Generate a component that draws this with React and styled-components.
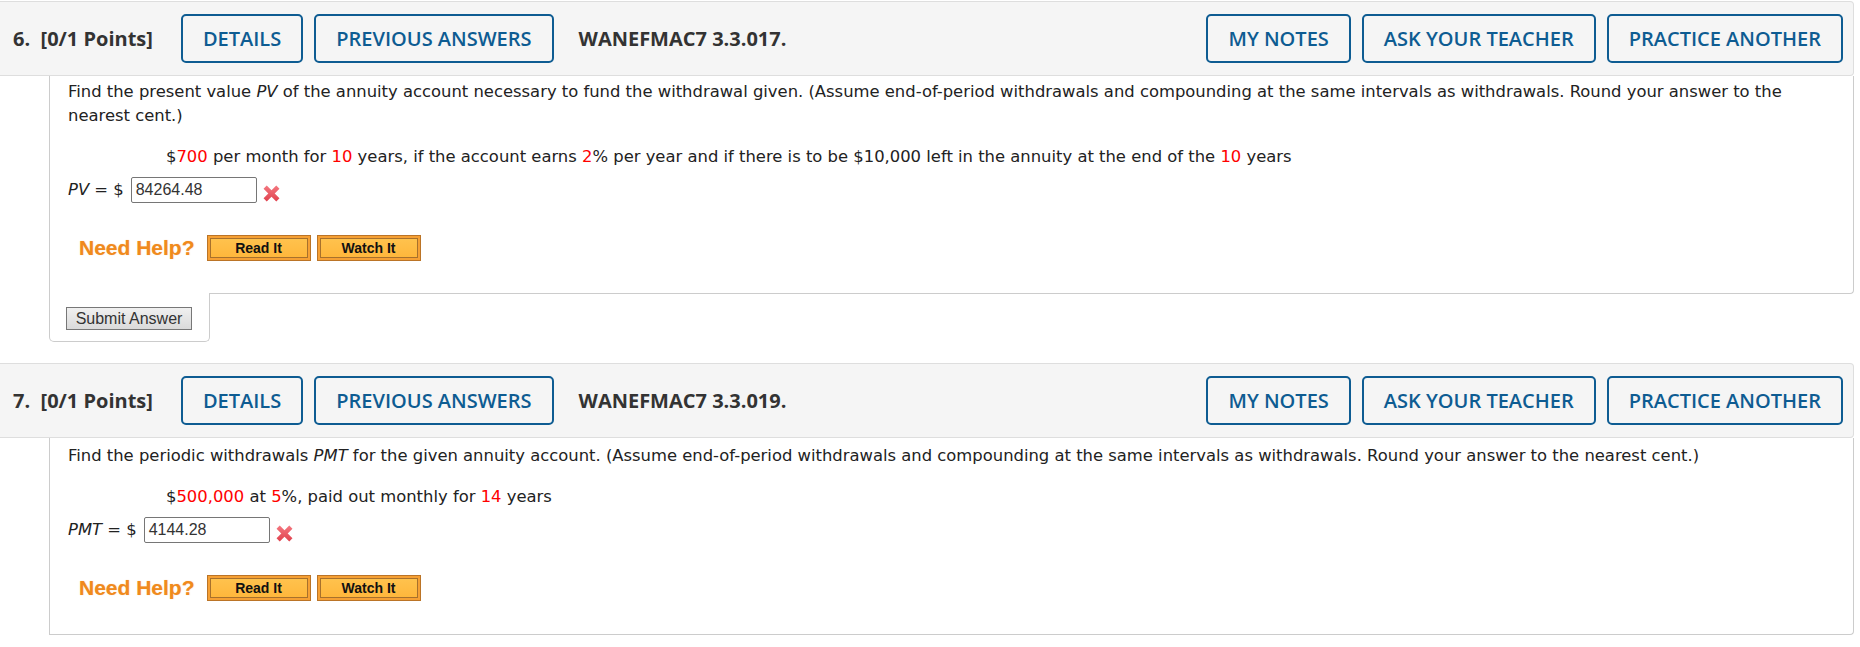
import React from 'react';
import styled, { createGlobalStyle } from 'styled-components';

const GlobalStyle = createGlobalStyle`
  body {
    margin: 0;
    background: #fff;
    font-family: "DejaVu Sans", Verdana, sans-serif;
  }
`

const Page = styled.div`
  width: 1854px;
  padding-top: 1px;
`

const Question = styled.section`
  margin-bottom: 21px;
`

const Header = styled.div`
  display: flex;
  align-items: center;
  gap: 11px;
  height: 73px;
  padding: 0 10px 0 13px;
  background: #f5f5f5;
  border: 1px solid #dedede;
  border-left: none;
  border-radius: 0 4px 4px 0;
  font-family: "Open Sans", "Noto Sans", sans-serif;
  font-size: 20px;
  line-height: 28px;
  color: #333;
`

const Points = styled.span`
  font-weight: 700;
  margin-right: 17px;
  white-space: pre;
`

const Code = styled.span`
  font-weight: 700;
  margin-left: 14px;
`

const RightGroup = styled.div`
  display: flex;
  gap: 11px;
  margin-left: auto;
`

const HeaderButton = styled.button`
  height: 49px;
  padding: 0 20px;
  background: transparent;
  border: 2px solid #0e5c92;
  border-radius: 5px;
  color: #0e5c92;
  font-family: inherit;
  font-size: 20px;
  font-weight: 600;
`

const Body = styled.div`
  margin-left: 49px;
  padding: ${p => p.$top}px 30px ${p => p.$bottom}px 18px;
  border: 1px solid #cccccc;
  border-top: none;
  border-radius: 0 0 4px 0;
  font-size: 16.4px;
  line-height: 24px;
  color: #222;
`

const Prompt = styled.p`
  margin: 0;
`

const Var = styled.i``

const Red = styled.span`
  color: #f00;
`

const Equation = styled.div`
  margin: 17px 0 0 98px;
`

const AnswerRow = styled.div`
  display: flex;
  align-items: center;
  margin-top: 8px;
`

const AnswerLabel = styled.span`
  margin-right: 7px;
`

const AnswerInput = styled.div`
  box-sizing: border-box;
  width: 126px;
  height: 26px;
  padding: 0 4px;
  border: 1px solid #767676;
  border-radius: 2px;
  font-family: "Liberation Sans", Arial, sans-serif;
  font-size: 16px;
  line-height: 24px;
  color: #333;
`

const WrongMark = styled.svg`
  width: 17px;
  height: 17px;
  margin-left: 6px;
  margin-top: 6px;
`

const HelpRow = styled.div`
  display: flex;
  align-items: center;
  margin: 32px 0 0 11px;
`

const NeedHelp = styled.span`
  font-family: "Liberation Sans", Arial, sans-serif;
  font-weight: 700;
  font-size: 21px;
  color: #f08a1d;
  margin-right: 12px;
  text-shadow: 0 0 1px rgba(240, 138, 29, 0.5);
`

const HelpButton = styled.button`
  box-sizing: border-box;
  width: 104px;
  height: 26px;
  margin-right: 6px;
  padding: 2px;
  background: #f6a034;
  border: 1px solid #bb7427;
  display: flex;
`

const HelpFace = styled.span`
  flex: 1;
  border: 1px solid #a8712c;
  background: linear-gradient(#ffc24d, #ffb73c);
  font-family: "Liberation Sans", Arial, sans-serif;
  font-weight: 700;
  font-size: 14px;
  line-height: 18px;
  color: #111;
`

const SubmitTab = styled.div`
  width: 143px;
  margin: -1px 0 0 49px;
  padding: 14px 0 11px 16px;
  background: #fff;
  border: 1px solid #cccccc;
  border-top: none;
  border-radius: 0 0 5px 5px;
  position: relative;
`

const SubmitButton = styled.button`
  box-sizing: border-box;
  width: 126px;
  height: 23px;
  padding: 0;
  background: linear-gradient(#f0f0f0, #dadada);
  border: 1px solid #777;
  font-family: "Liberation Sans", Arial, sans-serif;
  font-size: 16px;
  color: #333;
`

function Cross() {
  return (
    <WrongMark viewBox="0 0 16 16">
      <defs>
        <linearGradient id="xg" x1="0" y1="0" x2="0" y2="1">
          <stop offset="0" stopColor="#f47880" />
          <stop offset="1" stopColor="#e0414d" />
        </linearGradient>
      </defs>
      <path
        d="M0.5 3.5 L3.5 0.5 L8 5 L12.5 0.5 L15.5 3.5 L11 8 L15.5 12.5 L12.5 15.5 L8 11 L3.5 15.5 L0.5 12.5 L5 8 Z"
        fill="url(#xg)"
      />
    </WrongMark>
  )
}

function HelpButtons() {
  return (
    <HelpRow>
      <NeedHelp>Need Help?</NeedHelp>
      <HelpButton><HelpFace>Read It</HelpFace></HelpButton>
      <HelpButton><HelpFace>Watch It</HelpFace></HelpButton>
    </HelpRow>
  )
}

function QuestionHeader({ num, code }) {
  return (
    <Header>
      <Points>{num}.  [0/1 Points]</Points>
      <HeaderButton>DETAILS</HeaderButton>
      <HeaderButton>PREVIOUS ANSWERS</HeaderButton>
      <Code>{code}</Code>
      <RightGroup>
        <HeaderButton>MY NOTES</HeaderButton>
        <HeaderButton>ASK YOUR TEACHER</HeaderButton>
        <HeaderButton>PRACTICE ANOTHER</HeaderButton>
      </RightGroup>
    </Header>
  )
}

function App() {
  return (
    <Page>
      <GlobalStyle />
      <Question>
        <QuestionHeader num="6" code="WANEFMAC7 3.3.017." />
        <Body $top={4} $bottom={32}>
          <Prompt>
            Find the present value <Var>PV</Var> of the annuity account necessary to fund the withdrawal given. (Assume end-of-period withdrawals and compounding at the same intervals as withdrawals. Round your answer to the nearest cent.)
          </Prompt>
          <Equation>
            $<Red>700</Red> per month for <Red>10</Red> years, if the account earns <Red>2</Red>% per year and if there is to be $10,000 left in the annuity at the end of the <Red>10</Red> years
          </Equation>
          <AnswerRow>
            <AnswerLabel><Var>PV</Var> = $</AnswerLabel>
            <AnswerInput>84264.48</AnswerInput>
            <Cross />
          </AnswerRow>
          <HelpButtons />
        </Body>
        <SubmitTab>
          <SubmitButton>Submit Answer</SubmitButton>
        </SubmitTab>
      </Question>
      <Question>
        <QuestionHeader num="7" code="WANEFMAC7 3.3.019." />
        <Body $top={6} $bottom={33}>
          <Prompt>
            Find the periodic withdrawals <Var>PMT</Var> for the given annuity account. (Assume end-of-period withdrawals and compounding at the same intervals as withdrawals. Round your answer to the nearest cent.)
          </Prompt>
          <Equation>
            $<Red>500,000</Red> at <Red>5</Red>%, paid out monthly for <Red>14</Red> years
          </Equation>
          <AnswerRow>
            <AnswerLabel><Var>PMT</Var> = $</AnswerLabel>
            <AnswerInput>4144.28</AnswerInput>
            <Cross />
          </AnswerRow>
          <HelpButtons />
        </Body>
      </Question>
    </Page>
  );
}

export default App;
